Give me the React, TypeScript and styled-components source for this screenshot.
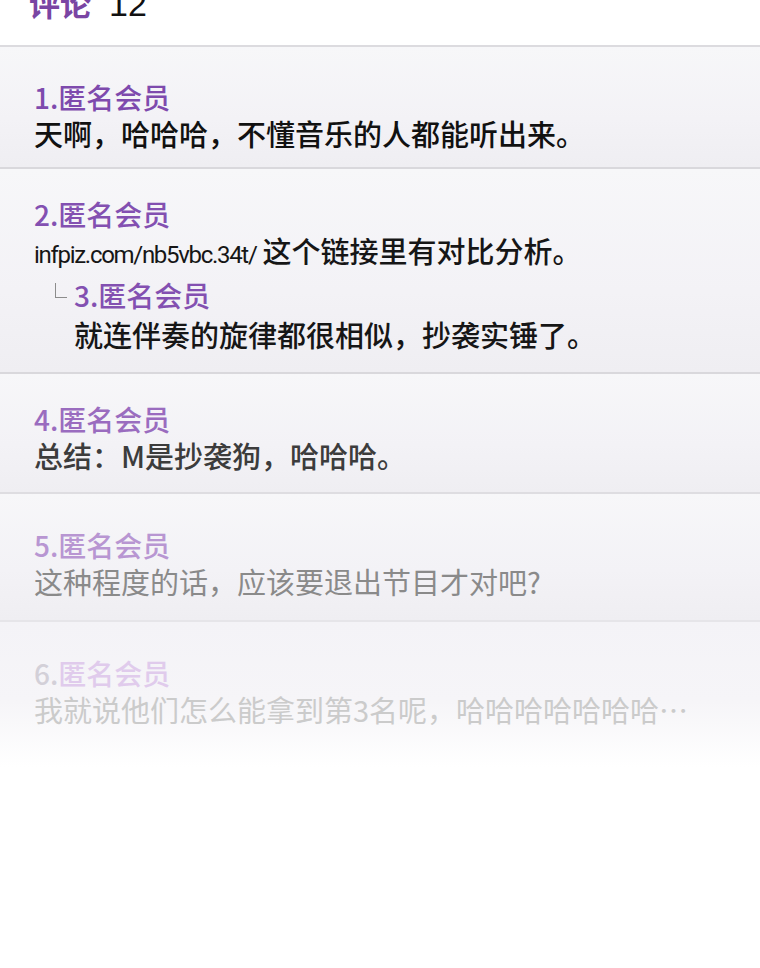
import styled, { createGlobalStyle } from "styled-components";

const GlobalStyle = createGlobalStyle`
  html, body {
    margin: 0;
    padding: 0;
    background: #ffffff;
  }
  body {
    font-family: "Noto Sans CJK SC", "Noto Sans", sans-serif;
    -webkit-font-smoothing: antialiased;
  }
`;

// colours for each row as the list fades out toward the bottom
const tones = [
  { num: "#7e4aad", name: "#7e4aad", body: "#111111", line: "#d9d8dc", weight: 500 },
  { num: "#8350b1", name: "#8350b1", body: "#161616", line: "#d9d8dc", weight: 500 },
  { num: "#9a6cbf", name: "#9a6cbf", body: "#3c3c3c", line: "#dedde1", weight: 500 },
  { num: "#b896d2", name: "#b896d2", body: "#8a8a8a", line: "#e6e5e9", weight: 400 },
  { num: "#d3d0d8", name: "#e0cbec", body: "#cbcbcb", line: "", weight: 400 },
];

type Tone = (typeof tones)[number];

const Page = styled.div`
  width: 760px;
  min-height: 968px;
  background: #ffffff;
  overflow: hidden;
`;

const Header = styled.div`
  display: flow-root;
  height: 47px;
  box-sizing: border-box;
  padding-left: 29px;
  border-bottom: 2px solid #dcdbdf;
  background: #ffffff;
`;

const Title = styled.div`
  display: flex;
  align-items: baseline;
  gap: 18px;
  margin-top: -13px;
  line-height: 32px;
`;

const TitleWord = styled.span`
  font-size: 31px;
  font-weight: 700;
  color: #7a45a3;
`;

const Count = styled.span`
  font-family: "Liberation Sans", Arial, sans-serif;
  font-size: 34px;
  font-weight: 400;
  color: #111111;
`;

const List = styled.div`
  display: flex;
  flex-direction: column;
`;

const Row = styled.div<{ $tone: Tone; $top: number; $bottom: number }>`
  padding: ${(p) => p.$top}px 20px ${(p) => p.$bottom}px 34px;
  border-bottom: ${(p) => (p.$tone.line ? `2px solid ${p.$tone.line}` : "none")};
  background: ${(p) =>
    p.$tone.line
      ? "linear-gradient(#f7f7f9 0%, #f3f2f6 60%, #efeef2 100%)"
      : "linear-gradient(#f4f3f7 0%, #f6f5f8 55%, #ffffff 100%)"};
`;

const Author = styled.div<{ $tone: Tone }>`
  font-size: 28px;
  line-height: 36px;
  font-weight: 500;
  color: ${(p) => p.$tone.name};
`;

const Num = styled.span<{ $tone: Tone }>`
  color: ${(p) => p.$tone.num};
`;

const Body = styled.div<{ $tone: Tone }>`
  font-size: 29px;
  line-height: 36px;
  font-weight: ${(p) => p.$tone.weight};
  color: ${(p) => p.$tone.body};
  white-space: nowrap;
`;

const Link = styled.span`
  font-family: Roboto, "Liberation Sans", sans-serif;
  font-size: 24px;
  font-weight: 400;
  letter-spacing: -1.3px;
  margin-right: 6px;
`;

const Reply = styled.div`
  display: grid;
  grid-template-columns: 13px 1fr;
  column-gap: 6px;
  margin: 4px 0 0 21px;
`;

const Corner = styled.span`
  display: block;
  width: 11px;
  height: 14px;
  margin-top: 6px;
  border-left: 1.5px solid #8c8c8c;
  border-bottom: 1.5px solid #8c8c8c;
`;

const ReplyBody = styled(Body)`
  margin-top: 3px;
`;

type Comment = {
  no: number;
  text: string;
  link?: string;
  pad: [number, number];
  reply?: { no: number; text: string };
};

const comments: Comment[] = [
  { no: 1, text: "天啊，哈哈哈，不懂音乐的人都能听出来。", pad: [32, 16] },
  {
    no: 2,
    link: "infpiz.com/nb5vbc.34t/",
    text: "这个链接里有对比分析。",
    pad: [27, 20],
    reply: { no: 3, text: "就连伴奏的旋律都很相似，抄袭实锤了。" },
  },
  { no: 4, text: "总结：M是抄袭狗，哈哈哈。", pad: [27, 19] },
  { no: 5, text: "这种程度的话，应该要退出节目才对吧?", pad: [33, 21] },
  { no: 6, text: "我就说他们怎么能拿到第3名呢，哈哈哈哈哈哈哈…", pad: [33, 40] },
];

export default function App() {
  return (
    <Page>
      <GlobalStyle />
      <Header>
        <Title>
          <TitleWord>评论</TitleWord>
          <Count>12</Count>
        </Title>
      </Header>
      <List>
        {comments.map((c, i) => {
          const tone = tones[i];
          return (
            <Row key={c.no} $tone={tone} $top={c.pad[0]} $bottom={c.pad[1]}>
              <Author $tone={tone}>
                <Num $tone={tone}>{c.no}.</Num>匿名会员
              </Author>
              <Body $tone={tone}>
                {c.link && <Link>{c.link}</Link>}
                {c.text}
              </Body>
              {c.reply && (
                <Reply>
                  <Corner />
                  <div>
                    <Author $tone={tone}>
                      <Num $tone={tone}>{c.reply.no}.</Num>匿名会员
                    </Author>
                    <ReplyBody $tone={tone}>{c.reply.text}</ReplyBody>
                  </div>
                </Reply>
              )}
            </Row>
          );
        })}
      </List>
    </Page>
  );
}
